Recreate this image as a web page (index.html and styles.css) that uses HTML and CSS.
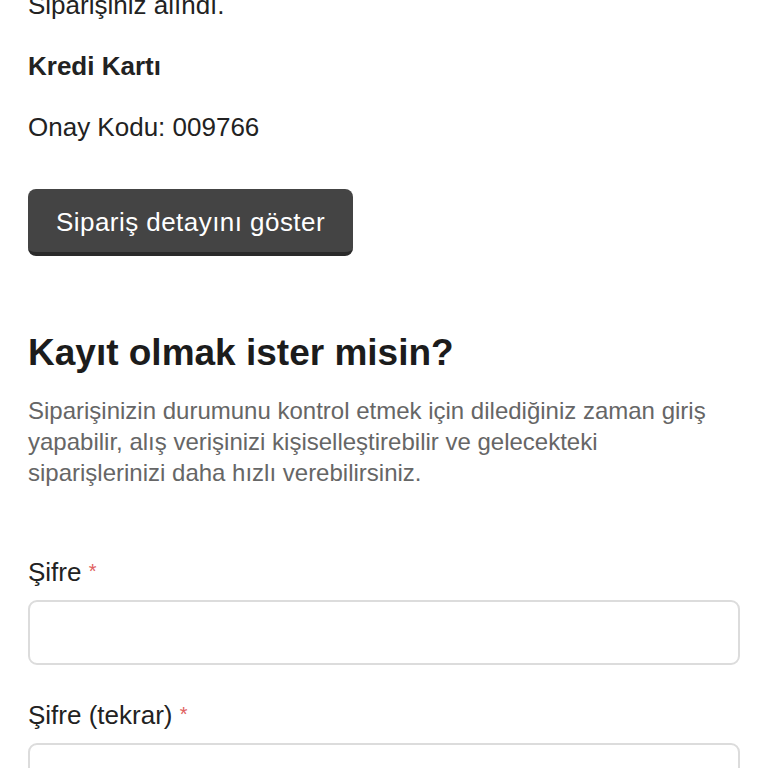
FILE: index.html
```html
<!DOCTYPE html>
<html lang="tr">
<head>
<meta charset="utf-8">
<link rel="stylesheet" href="styles.css">
</head>
<body>
<main class="page">
  <section class="order">
    <p class="status">Siparişiniz alındı.</p>
    <p class="method">Kredi Kartı</p>
    <p class="code">Onay Kodu: 009766</p>
    <button class="btn" type="button">Sipariş detayını göster</button>
  </section>
  <section class="register">
    <h2 class="title">Kayıt olmak ister misin?</h2>
    <p class="lead">Siparişinizin durumunu kontrol etmek için dilediğiniz zaman giriş yapabilir, alış verişinizi kişiselleştirebilir ve gelecekteki siparişlerinizi daha hızlı verebilirsiniz.</p>
    <form class="form">
      <div class="field">
        <label class="label">Şifre <span class="req">*</span></label>
        <input class="input" type="password">
      </div>
      <div class="field">
        <label class="label">Şifre (tekrar) <span class="req">*</span></label>
        <input class="input" type="password">
      </div>
    </form>
  </section>
</main>
</body>
</html>
```
FILE: styles.css
```css
html, body {
  margin: 0;
  padding: 0;
  background: #fff;
}
.page {
  padding: 0 28px;
  font-family: "Liberation Sans", Arial, sans-serif;
  color: #222;
  margin-top: -13px;
}
.order p {
  margin: 0 0 24px;
  font-size: 26px;
  line-height: 37px;
}
.order .method {
  font-weight: bold;
}
.btn {
  margin-top: 43px;
  display: block;
  background: #444;
  color: #fff;
  font-family: inherit;
  font-size: 26px;
  border: 0;
  border-bottom: 4px solid #2a2a2a;
  border-radius: 8px;
  height: 67px;
  padding: 4px 28px 0;
  letter-spacing: 0.45px;
}
.register {
  margin-top: 75px;
}
.title {
  margin: 0 0 20px;
  font-size: 37px;
  line-height: 44px;
  font-weight: bold;
  color: #1c1c1c;
}
.lead {
  margin: 0;
  font-size: 24px;
  line-height: 31px;
  color: #666;
}
.form {
  margin-top: 68px;
  display: flex;
  flex-direction: column;
  gap: 34px;
}
.field {
  display: flex;
  flex-direction: column;
  gap: 13px;
}
.label {
  font-size: 26px;
  line-height: 30px;
  color: #222;
}
.req {
  color: #e06060;
  font-size: 20px;
  vertical-align: 3px;
}
.input {
  box-sizing: border-box;
  width: 100%;
  height: 65px;
  border: 2px solid #dcdcdc;
  border-radius: 9px;
  background: #fff;
  margin: 0;
}
```
